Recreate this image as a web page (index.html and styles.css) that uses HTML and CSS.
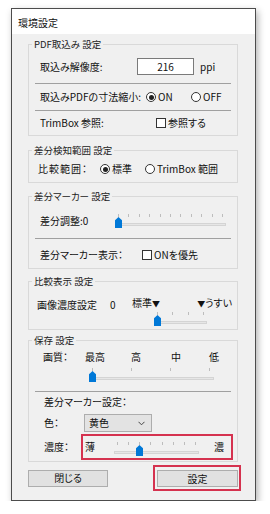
FILE: index.html
```html
<!DOCTYPE html>
<html lang="ja">
<head>
  <meta charset="UTF-8">
  <meta name="viewport" content="width=device-width, initial-scale=1.0">
  <title>環境設定</title>
  <link rel="stylesheet" href="styles.css">
</head>
<body>
  <div class="dialog">
    <div class="titlebar">環境設定</div>
    <div class="client">

      <!-- PDF取込み -->
      <fieldset class="group g-import">
        <legend>PDF取込み 設定</legend>
        <div class="row r-res">
          <span class="label w-res">取込み解像度:</span>
          <input class="numbox" type="text" value="216">
          <span class="unit">ppi</span>
        </div>
        <div class="sep"></div>
        <div class="row r-shrink">
          <span class="label w-shrink">取込みPDFの寸法縮小:</span>
          <span class="opt"><span class="radio checked"></span>ON</span>
          <span class="opt last"><span class="radio"></span>OFF</span>
        </div>
        <div class="sep"></div>
        <div class="row r-trim">
          <span class="label w-trim">TrimBox 参照:</span>
          <span class="opt last"><span class="checkbox"></span>参照する</span>
        </div>
      </fieldset>

      <!-- 差分検知範囲 -->
      <fieldset class="group g-range">
        <legend>差分検知範囲 設定</legend>
        <div class="row r-range">
          <span class="label w-range">比較範囲：</span>
          <span class="opt"><span class="radio checked"></span>標準</span>
          <span class="opt last"><span class="radio"></span>TrimBox 範囲</span>
        </div>
      </fieldset>

      <!-- 差分マーカー -->
      <fieldset class="group g-marker">
        <legend>差分マーカー 設定</legend>
        <div class="row r-adjust">
          <span class="label w-adjust">差分調整:0</span>
          <div class="slider s-adjust">
            <div class="ticks">
              <i></i><i></i><i></i><i></i><i></i><i></i><i></i><i></i><i></i><i></i><i></i>
            </div>
            <div class="track"></div>
            <svg class="thumb" style="left: 0px" width="7" height="11" viewBox="0 0 7 11"><path d="M3.5 0L7 3.2V11H0V3.2Z"/></svg>
          </div>
        </div>
        <div class="sep"></div>
        <div class="row r-show">
          <span class="label w-show">差分マーカー表示：</span>
          <span class="opt last"><span class="checkbox"></span>ONを優先</span>
        </div>
      </fieldset>

      <!-- 比較表示 -->
      <fieldset class="group g-view">
        <legend>比較表示 設定</legend>
        <div class="row r-view">
          <span class="label w-view">画像濃度設定</span>
          <span class="value">0</span>
          <div class="scale">
            <div class="scale-labels">
              <span>標準<b>▼</b></span>
              <span><b>▼</b>うすい</span>
            </div>
            <div class="slider s-view">
              <div class="ticks"><i></i><i></i><i></i><i></i></div>
              <div class="track"></div>
              <svg class="thumb" style="left: 0px" width="7" height="11" viewBox="0 0 7 11"><path d="M3.5 0L7 3.2V11H0V3.2Z"/></svg>
            </div>
          </div>
        </div>
      </fieldset>

      <!-- 保存 -->
      <fieldset class="group g-save">
        <legend>保存 設定</legend>
        <div class="row r-quality">
          <span class="q q-label">画質：</span>
          <span class="q q-best">最高</span>
          <span class="q q-high">高</span>
          <span class="q q-mid">中</span>
          <span class="q">低</span>
        </div>
        <div class="slider s-quality">
          <div class="ticks"><i></i><i></i><i></i><i></i></div>
          <div class="track"></div>
          <svg class="thumb" style="left: 0px" width="7" height="11" viewBox="0 0 7 11"><path d="M3.5 0L7 3.2V11H0V3.2Z"/></svg>
        </div>
        <div class="sep sep-save"></div>
        <div class="row r-mk">差分マーカー設定：</div>
        <div class="row r-color">
          <span class="label w-color">色：</span>
          <div class="combo">
            <span>黄色</span>
            <svg width="7" height="5" viewBox="0 0 7 5"><polyline points="0.5,0.8 3.5,3.8 6.5,0.8"/></svg>
          </div>
        </div>
        <div class="row r-density">
          <span class="label w-density">濃度：</span>
          <div class="highlight density-box">
            <span class="d-light">薄</span>
            <div class="slider s-density">
              <div class="ticks"><i></i><i></i><i></i><i></i><i></i><i></i><i></i><i></i></div>
              <div class="track"></div>
              <svg class="thumb" style="left: 22px" width="7" height="11" viewBox="0 0 7 11"><path d="M3.5 0L7 3.2V11H0V3.2Z"/></svg>
            </div>
            <span class="d-dark">濃</span>
          </div>
        </div>
      </fieldset>

      <div class="buttons">
        <button class="btn btn-close">閉じる</button>
        <div class="highlight ok-box">
          <button class="btn btn-ok">設定</button>
        </div>
      </div>

    </div>
  </div>
</body>
</html>
```

FILE: styles.css
```css
* {
  box-sizing: border-box;
}
body {
  margin: 0;
  background: #fff;
  font-family: "Noto Sans CJK JP", "Noto Sans", sans-serif;
  font-size: 10px;
  line-height: 12px;
  color: #111;
  font-feature-settings: "palt";
}

/* window frame */
.dialog {
  width: 245px;
  height: 493px;
  margin: 8px 0 0 11px;
  border: 1px solid #4c4c4c;
  background: #f0f0f0;
  box-shadow: 2px 3px 7px rgba(0, 0, 0, 0.3);
}
.titlebar {
  height: 25px;
  padding: 2px 0 0 6px;
  display: flex;
  align-items: center;
  background: #fff;
}
.client {
  display: flex;
  flex-direction: column;
  padding: 4px 17px 0 16px;
}

/* group boxes */
.group {
  margin: 0;
  padding: 0;
  min-width: 0;
  border: 1px solid #d9d9d9;
}
.group legend {
  margin-left: 3px;
  padding: 0 2px;
  font-size: 9.5px;
  line-height: 12px;
  color: #222;
}
.g-import { height: 98px; }
.g-range { height: 39px; margin-top: 8px; }
.g-marker { height: 79px; margin-top: 7px; }
.g-view { height: 55px; margin-top: 6px; }
.g-save { height: 128px; margin-top: 4px; }

.row {
  display: flex;
  align-items: center;
  white-space: nowrap;
}
.label {
  flex: none;
}
.sep {
  height: 1px;
  margin: 0 6px;
  background: #a0a0a0;
}

/* PDF取込み */
.r-res { height: 33px; padding-left: 11px; }
.r-shrink { height: 26px; padding-left: 11px; }
.r-trim { height: 24px; padding-left: 11px; }
.w-res { width: 97px; }
.w-shrink { width: 106px; }
.w-trim { width: 116px; }
.numbox {
  width: 57px;
  height: 17px;
  padding: 0;
  border: 1px solid #7a7a7a;
  background: #fff;
  font: inherit;
  color: #111;
  text-align: center;
}
.unit {
  margin-left: 6px;
}

/* radios and checkboxes */
.opt {
  display: flex;
  align-items: center;
  gap: 2px;
  width: 45px;
}
.opt.last {
  width: auto;
}
.radio {
  width: 10px;
  height: 10px;
  border: 1px solid #333;
  border-radius: 50%;
  background: #fff;
  display: flex;
  align-items: center;
  justify-content: center;
}
.radio.checked::after {
  content: "";
  width: 5px;
  height: 5px;
  border-radius: 50%;
  background: #222;
}
.checkbox {
  width: 10px;
  height: 10px;
  border: 1px solid #333;
  background: #fff;
}

/* 差分検知範囲 */
.r-range { height: 26px; padding-left: 9px; }
.w-range { width: 62px; letter-spacing: 1px; }

/* 差分マーカー */
.r-adjust { height: 36px; padding: 2px 0 0 11px; }
.w-adjust { width: 75px; }
.r-show { height: 29px; padding: 2px 0 0 11px; }
.w-show { width: 102px; }

/* sliders */
.slider {
  position: relative;
  height: 14px;
  flex: none;
}
.ticks {
  display: flex;
  justify-content: space-between;
  height: 3px;
  padding: 0 3px;
}
.ticks i {
  width: 1px;
  height: 3px;
  background: #bdbdbd;
}
.track {
  height: 3px;
  margin-top: 6px;
  border: 1px solid #d4d4d4;
  background: #e6e6e6;
}
.thumb {
  position: absolute;
  top: 3px;
  fill: #0078d7;
}
.s-adjust { width: 111px; }
.s-view { width: 53px; margin: 2px 0 0 22px; }
.s-quality { width: 125px; margin: 4px 0 0 60px; }
.s-quality .ticks { padding-right: 4px; }
.s-density { width: 85px; align-self: flex-start; margin-top: 6px; }

/* 比較表示 */
.r-view {
  align-items: flex-start;
  padding: 10px 0 0 8px;
}
.w-view { width: 73px; margin-top: 2px; }
.value { width: 22px; margin-top: 2px; }
.scale { width: 100px; }
.scale-labels {
  display: flex;
  justify-content: space-between;
}
.scale-labels b {
  font-weight: normal;
  font-size: 8px;
}

/* 保存 */
.r-quality {
  height: 14px;
  margin-top: 4px;
  padding-left: 14px;
}
.q-label { width: 42px; }
.q-best { width: 46px; }
.q-high { width: 40px; }
.q-mid { width: 38px; }
.sep-save { margin-top: 9px; }
.r-mk { height: 20px; padding-left: 15px; }
.r-color { height: 18px; margin-top: 2px; padding-left: 15px; }
.w-color { width: 40px; }
.combo {
  width: 68px;
  height: 18px;
  display: flex;
  align-items: center;
  justify-content: space-between;
  padding: 0 6px 0 4px;
  border: 1px solid #adadad;
  background: #e3e3e3;
}
.combo svg {
  fill: none;
  stroke: #444;
  stroke-width: 1;
}
.r-density { height: 26px; margin-top: 2px; padding-left: 15px; }
.w-density { width: 37px; }
.highlight {
  border: 2px solid #d5324f;
}
.density-box {
  width: 152px;
  height: 26px;
  display: flex;
  align-items: center;
  padding-left: 2px;
}
.d-light { width: 29px; }
.d-dark { margin-left: 15px; }

/* buttons */
.buttons {
  display: flex;
  justify-content: space-between;
  align-items: center;
  margin: 3px -3px 0 0;
}
.btn {
  height: 17px;
  padding: 0;
  border: 1px solid #adadad;
  background: #e1e1e1;
  font: inherit;
  color: #111;
}
.btn-close { width: 80px; }
.btn-ok { width: 81px; display: block; }
.ok-box {
  padding: 3px 1px 2px 2px;
}
```
